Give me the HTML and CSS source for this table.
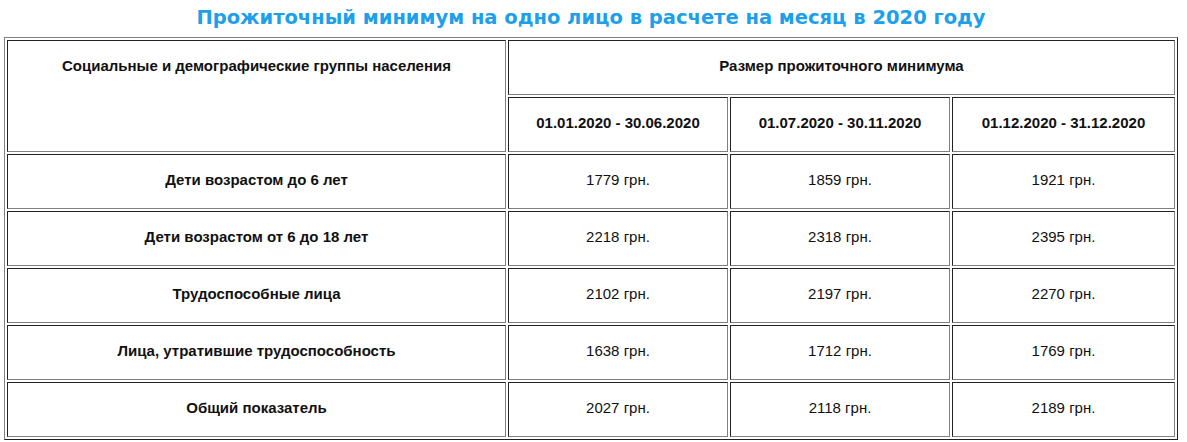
FILE: index.html
```html
<!DOCTYPE html>
<html lang="ru">
<head>
<meta charset="utf-8">
<title>Прожиточный минимум</title>
<link rel="stylesheet" href="styles.css">
</head>
<body>
<div class="page">
  <h2 class="title">Прожиточный минимум на одно лицо в расчете на месяц в 2020 году</h2>
  <table class="grid">
    <colgroup>
      <col class="c-group">
      <col class="c-p1">
      <col class="c-p2">
      <col class="c-p3">
    </colgroup>
    <tr>
      <th class="group" rowspan="2">Социальные и демографические группы населения</th>
      <th colspan="3">Размер прожиточного минимума</th>
    </tr>
    <tr>
      <th class="period">01.01.2020 - 30.06.2020</th>
      <th class="period">01.07.2020 - 30.11.2020</th>
      <th class="period">01.12.2020 - 31.12.2020</th>
    </tr>
    <tr>
      <th>Дети возрастом до 6 лет</th>
      <td>1779 грн.</td>
      <td>1859 грн.</td>
      <td>1921 грн.</td>
    </tr>
    <tr>
      <th>Дети возрастом от 6 до 18 лет</th>
      <td>2218 грн.</td>
      <td>2318 грн.</td>
      <td>2395 грн.</td>
    </tr>
    <tr>
      <th>Трудоспособные лица</th>
      <td>2102 грн.</td>
      <td>2197 грн.</td>
      <td>2270 грн.</td>
    </tr>
    <tr>
      <th>Лица, утратившие трудоспособность</th>
      <td>1638 грн.</td>
      <td>1712 грн.</td>
      <td>1769 грн.</td>
    </tr>
    <tr>
      <th>Общий показатель</th>
      <td>2027 грн.</td>
      <td>2118 грн.</td>
      <td>2189 грн.</td>
    </tr>
  </table>
</div>
</body>
</html>
```

FILE: styles.css
```css
html, body {
  margin: 0;
  padding: 0;
  background: #ffffff;
}

.page {
  padding: 5px 0 0 4px;
  width: 1174px;
}

.title {
  margin: 0 0 6px 0;
  padding: 0;
  text-align: center;
  font-family: "DejaVu Sans", Verdana, sans-serif;
  font-weight: bold;
  font-size: 19.5px;
  line-height: 26px;
  color: #1e9fea;
}

.grid {
  width: 1174px;
  border-collapse: separate;
  border-spacing: 2px;
  border: 1px solid;
  border-color: #808080 #222222 #222222 #808080;
  font-family: "Liberation Sans", Arial, sans-serif;
  font-size: 15px;
  color: #111111;
  table-layout: fixed;
}

.c-group { width: 499px; }
.c-p1 { width: 220px; }
.c-p2 { width: 220px; }
.c-p3 { width: auto; }

.grid th,
.grid td {
  border: 1px solid;
  border-color: #222222 #808080 #808080 #222222;
  height: 49px;
  padding: 0 1px 4px 1px;
  text-align: center;
  vertical-align: middle;
  line-height: 17px;
}

.grid th {
  font-weight: bold;
}

.grid td {
  font-weight: normal;
}

.grid th.group {
  vertical-align: top;
  padding-top: 16px;
}
```
